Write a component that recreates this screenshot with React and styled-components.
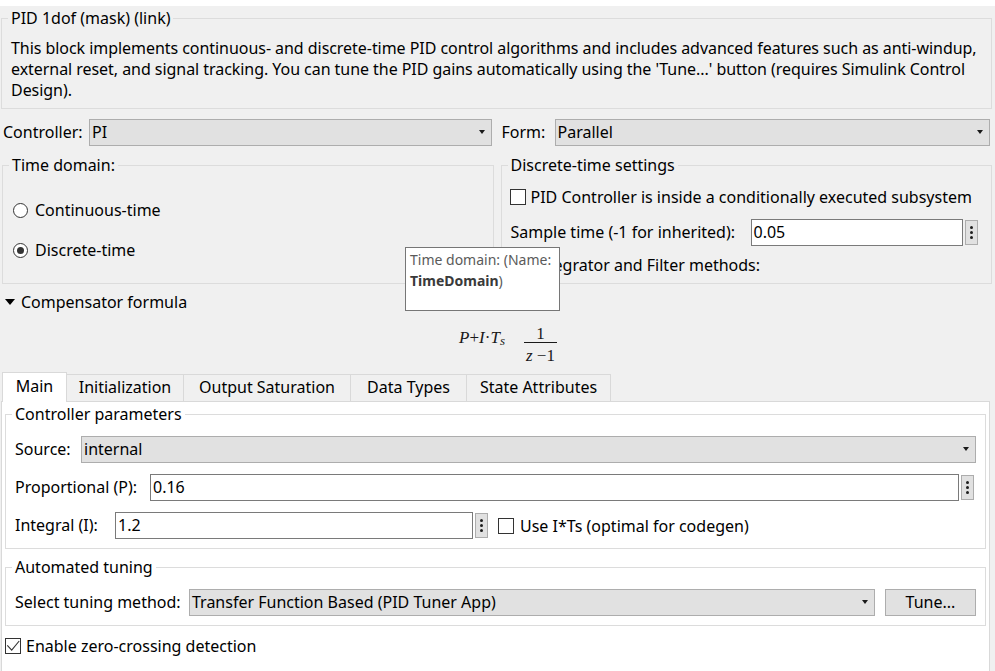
import React from 'react';
import styled, { createGlobalStyle } from 'styled-components';

const GlobalStyle = createGlobalStyle`
  html, body { margin: 0; padding: 0; background: #f0f0f0; }
  body {
    font-family: "Noto Sans", "Open Sans", "DejaVu Sans", sans-serif;
    font-size: 16px;
    color: #000;
  }
  *, *::before, *::after { box-sizing: border-box; }
`;

const Page = styled.div`
  position: relative;
  width: 995px;
  height: 671px;
  overflow: hidden;
  background: #f0f0f0;
  display: flex;
  flex-direction: column;
`;

const TopStrip = styled.div`
  height: 6px;
  background: #fff;
  flex: none;
`;

const Group = styled.fieldset`
  margin: ${p => p.$m || '0'};
  padding: 0 6px;
  border: 1px solid #dcdcdc;
  min-width: 0;
`;

const Legend = styled.legend`
  padding: 0 3px;
  height: 20px;
  line-height: 20px;
  white-space: nowrap;
`;

const Body = styled.div`
  display: flex;
  flex-direction: column;
  padding: ${p => p.$p || '0'};
  gap: ${p => p.$gap || 0}px;
`;

const Description = styled.div`
  padding: 10px 0 7px 3px;
  line-height: 21px;
  white-space: nowrap;
  letter-spacing: -0.05px;
`;

const TopRow = styled.div`
  display: grid;
  grid-template-columns: 1fr 1fr;
  column-gap: 10px;
  margin: 10px 5px 0 3px;
`;

const GroupsRow = styled.div`
  display: grid;
  grid-template-columns: 1fr 1fr;
  column-gap: 7px;
  margin: 9px 3px 0 2px;
`;

const Row = styled.div`
  display: flex;
  align-items: center;
  height: ${p => p.$h || 27}px;
  padding: ${p => p.$p || '0'};
  margin-top: ${p => p.$mt || 0}px;
  gap: ${p => p.$gap || 0}px;
  white-space: nowrap;
`;

const Label = styled.span`
  flex: none;
  width: ${p => p.$w}px;
  line-height: 27px;
  white-space: nowrap;
`;

const Combo = styled.div`
  flex: 1;
  min-width: 0;
  height: 27px;
  display: flex;
  align-items: center;
  justify-content: space-between;
  background: #e1e1e1;
  border: 1px solid #adadad;
  padding: 0 6px 0 2px;
  line-height: 25px;
  white-space: nowrap;
`;

const Arrow = styled.span`
  width: 0;
  height: 0;
  margin-top: -2px;
  border-left: 3px solid transparent;
  border-right: 3px solid transparent;
  border-top: 4px solid #1a1a1a;
`;

const Edit = styled.div`
  flex: ${p => (p.$w ? 'none' : '1')};
  width: ${p => (p.$w ? `${p.$w}px` : 'auto')};
  min-width: 0;
  height: 27px;
  background: #fff;
  border: 1px solid #7a7a7a;
  padding: 0 2px;
  line-height: 25px;
`;

const DotsButton = styled.div`
  flex: none;
  width: 13px;
  height: 25px;
  margin-left: 2px;
  background: #e1e1e1;
  border: 1px solid #adadad;
  display: flex;
  flex-direction: column;
  align-items: center;
  justify-content: center;
  gap: 2px;
`;

const Dot = styled.span`
  width: 3px;
  height: 3px;
  border-radius: 50%;
  background: #1e1e1e;
`;

const Button = styled.div`
  flex: none;
  width: ${p => p.$w}px;
  height: 27px;
  background: #e1e1e1;
  border: 1px solid #adadad;
  text-align: center;
  line-height: 25px;
`;

const Spacer = styled.span`
  flex: none;
  width: ${p => p.$w}px;
`;

const RadioCircle = styled.span`
  flex: none;
  width: 15px;
  height: 15px;
  border-radius: 50%;
  border: 1px solid #333;
  background: #fff;
  display: flex;
  align-items: center;
  justify-content: center;
  margin-right: 7px;
  &::after {
    content: '';
    width: 7px;
    height: 7px;
    border-radius: 50%;
    background: ${p => (p.$checked ? '#333' : 'transparent')};
  }
`;

const Box = styled.span`
  flex: none;
  width: 16px;
  height: 16px;
  border: 1px solid #333;
  background: #fff;
  margin-right: ${p => p.$gap || 5}px;
  display: flex;
`;

const CaretDown = styled.span`
  flex: none;
  width: 0;
  height: 0;
  border-left: 5.5px solid transparent;
  border-right: 5.5px solid transparent;
  border-top: 6px solid #000;
  margin-right: 6px;
`;

const CaretRight = styled.span`
  flex: none;
  width: 0;
  height: 0;
  border-top: 5.5px solid transparent;
  border-bottom: 5.5px solid transparent;
  border-left: 6px solid #000;
  margin: 0 11px 0 5px;
`;

const FormulaRow = styled.div`
  display: flex;
  justify-content: center;
  padding: 13px 0 8px 21px;
  flex: none;
`;

const Formula = styled.div`
  display: flex;
  align-items: flex-start;
  font-family: "Liberation Serif", "Times New Roman", serif;
  font-style: italic;
  font-size: 17px;
  color: #1a1a1a;
`;

const Terms = styled.div`
  margin-top: 4px;
  line-height: 17px;
  white-space: pre;
`;

const Up = styled.span`
  font-style: normal;
`;

const Sub = styled.span`
  font-size: 13px;
  vertical-align: -2px;
  line-height: 0;
`;

const Frac = styled.div`
  display: flex;
  flex-direction: column;
  align-items: center;
  margin-left: 19px;
  line-height: 17px;
`;

const FracBar = styled.span`
  align-self: stretch;
  height: 1px;
  background: #1a1a1a;
  margin-bottom: 4px;
`;

const Den = styled.span`
  padding: 0 2px;
  white-space: pre;
`;

const TabBar = styled.div`
  display: flex;
  align-items: flex-end;
  height: 29px;
  padding-left: 2px;
  position: relative;
  z-index: 1;
  flex: none;
`;

const Tab = styled.div`
  flex: none;
  width: ${p => p.$w}px;
  height: ${p => (p.$active ? 30 : 27)}px;
  margin-bottom: ${p => (p.$active ? -1 : 0)}px;
  background: ${p => (p.$active ? '#fff' : '#f0f0f0')};
  border: 1px solid #d9d9d9;
  border-bottom: none;
  border-left: ${p => (p.$first ? '1px solid #d9d9d9' : 'none')};
  text-align: center;
  line-height: ${p => (p.$active ? 27 : 25)}px;
  white-space: nowrap;
`;

const Panel = styled.div`
  flex: 1 0 auto;
  min-height: 290px;
  margin: 0 5px 0 1px;
  background: #fff;
  border: 1px solid #d9d9d9;
  padding: 2px 3px 0;
`;

const Tooltip = styled.div`
  position: absolute;
  left: 405px;
  top: 247px;
  width: 155px;
  height: 64px;
  background: #fff;
  border: 1px solid #767676;
  padding: 1px 4px;
  font-size: 14px;
  line-height: 21px;
  color: #5a5a5a;
  z-index: 5;
  white-space: nowrap;
`;

const TipStrong = styled.b`
  color: #3a3a3a;
  font-weight: 700;
`;

function ComboBox({ value }) {
  return (
    <Combo>
      <span>{value}</span>
      <Arrow />
    </Combo>
  );
}

function Dots() {
  return (
    <DotsButton>
      <Dot />
      <Dot />
      <Dot />
    </DotsButton>
  );
}

function Radio({ checked, children }) {
  return (
    <Row $h={40} $p="0 0 0 4px">
      <RadioCircle $checked={checked} />
      <span>{children}</span>
    </Row>
  );
}

function CheckBox({ checked, gap }) {
  return (
    <Box $gap={gap}>
      {checked && (
        <svg width="14" height="14" viewBox="0 0 14 14">
          <polyline points="1.3,6.3 5.7,11.2 13.2,2" fill="none" stroke="#333" strokeWidth="1.1" />
        </svg>
      )}
    </Box>
  );
}

export default function App() {
  return (
    <>
      <GlobalStyle />
      <Page>
        <TopStrip />
        <Group $m="2px 3px 0 1px">
          <Legend>PID 1dof (mask) (link)</Legend>
          <Description>
            This block implements continuous- and discrete-time PID control algorithms and includes advanced features such as anti-windup,
            <br />
            external reset, and signal tracking. You can tune the PID gains automatically using the 'Tune...' button (requires Simulink Control
            <br />
            Design).
          </Description>
        </Group>

        <TopRow>
          <Row>
            <Label $w={86}>Controller:</Label>
            <ComboBox value="PI" />
          </Row>
          <Row>
            <Label $w={53}>Form:</Label>
            <ComboBox value="Parallel" />
          </Row>
        </TopRow>

        <GroupsRow>
          <Group>
            <Legend>Time domain:</Legend>
            <Body $p="15px 0 13px">
              <Radio>Continuous-time</Radio>
              <Radio checked>Discrete-time</Radio>
            </Body>
          </Group>
          <Group>
            <Legend>Discrete-time settings</Legend>
            <Body $p="11px 7px 7px 0">
              <Row $h={22} $p="0 0 0 2px">
                <CheckBox />
                <span>PID Controller is inside a conditionally executed subsystem</span>
              </Row>
              <Row $p="0 0 0 3px" $mt={11}>
                <Label $w={240}>Sample time (-1 for inherited):</Label>
                <Edit>0.05</Edit>
                <Dots />
              </Row>
              <Row $h={22} $p="0 0 0 3px" $mt={8}>
                <CaretRight />
                <span>Integrator and Filter methods:</span>
              </Row>
            </Body>
          </Group>
        </GroupsRow>

        <Row $h={20} $p="0 0 0 5px" $mt={8}>
          <CaretDown />
          <span>Compensator formula</span>
        </Row>

        <FormulaRow>
          <Formula>
            <Terms>
              P<Up>+</Up>I<Up>·</Up>T<Sub>s</Sub>
            </Terms>
            <Frac>
              <Up>1</Up>
              <FracBar />
              <Den>
                z <Up>−1</Up>
              </Den>
            </Frac>
          </Formula>
        </FormulaRow>

        <TabBar>
          <Tab $w={65} $active $first>Main</Tab>
          <Tab $w={117}>Initialization</Tab>
          <Tab $w={167}>Output Saturation</Tab>
          <Tab $w={116}>Data Types</Tab>
          <Tab $w={144}>State Attributes</Tab>
        </TabBar>

        <Panel>
          <Group>
            <Legend>Controller parameters</Legend>
            <Body $p="12px 3px 9px" $gap={11}>
              <Row>
                <Label $w={66}>Source:</Label>
                <ComboBox value="internal" />
              </Row>
              <Row $p="0 2px 0 0">
                <Label $w={135}>Proportional (P):</Label>
                <Edit>0.16</Edit>
                <Dots />
              </Row>
              <Row>
                <Label $w={100}>Integral (I):</Label>
                <Edit $w={358}>1.2</Edit>
                <Dots />
                <Spacer $w={10} />
                <CheckBox gap={6} />
                <span>Use I*Ts (optimal for codegen)</span>
              </Row>
            </Body>
          </Group>

          <Group $m="8px 0 0 0">
            <Legend>Automated tuning</Legend>
            <Body $p="12px 3px 9px">
              <Row $gap={10}>
                <Label $w={164}>Select tuning method:</Label>
                <ComboBox value="Transfer Function Based (PID Tuner App)" />
                <Button $w={91}>Tune...</Button>
              </Row>
            </Body>
          </Group>

          <Row $h={22} $mt={9}>
            <CheckBox checked />
            <span>Enable zero-crossing detection</span>
          </Row>
        </Panel>

        <Tooltip>
          Time domain: (Name:
          <br />
          <TipStrong>TimeDomain</TipStrong>)
        </Tooltip>
      </Page>
    </>
  );
}
